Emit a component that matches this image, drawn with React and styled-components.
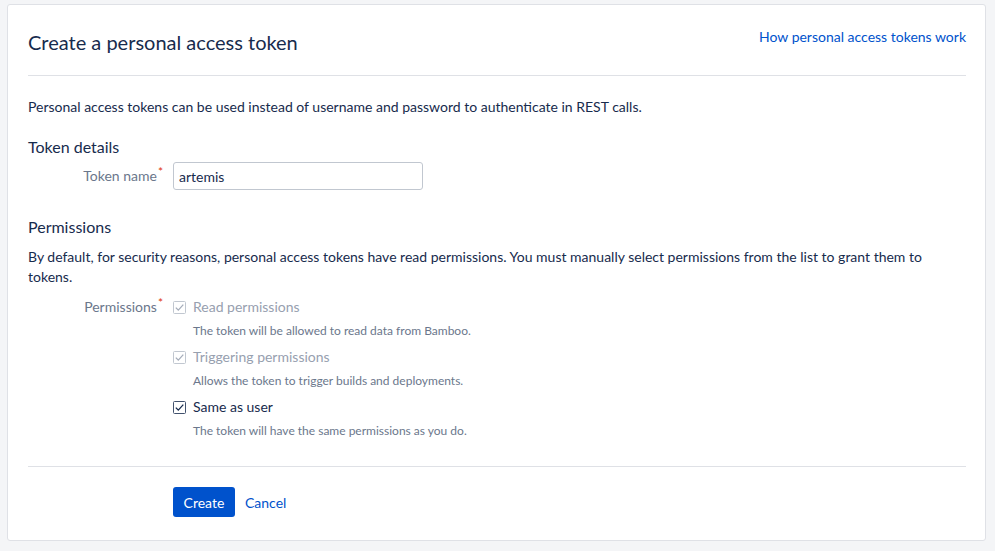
import React from 'react';
import styled, { createGlobalStyle } from 'styled-components';

const GlobalStyle = createGlobalStyle`
  html, body {
    margin: 0;
    padding: 0;
    background: #f4f5f7;
    font-family: Lato, "Open Sans", sans-serif;
    color: #172b4d;
  }
  * { box-sizing: border-box; }
`;

const Page = styled.div`
  padding: 4px 9px 9px 7px;
`;

const Panel = styled.section`
  background: #fff;
  border: 1px solid #dfe1e6;
  border-radius: 3px;
  padding: 22px 19px 23px 20px;
  min-height: 537px;
`;

const Header = styled.header`
  display: flex;
  justify-content: space-between;
  align-items: flex-start;
  padding-bottom: 19px;
  border-bottom: 1px solid #dfe1e6;
`;

const Title = styled.h1`
  margin: 1px 0 0;
  font-size: 20px;
  font-weight: 400;
  line-height: 28px;
`;

const Link = styled.a`
  color: #0052cc;
  text-decoration: none;
  font-size: 14px;
  line-height: 20px;
  cursor: pointer;
`;

const Text = styled.p`
  margin: ${(p) => p.$mt || 0}px 0 0;
  font-size: 14px;
  line-height: 20px;
`;

const SectionTitle = styled.h2`
  margin: ${(p) => p.$mt}px 0 0;
  font-size: 16px;
  font-weight: 400;
  line-height: 24px;
`;

const FieldRow = styled.div`
  display: grid;
  grid-template-columns: 135px 1fr;
  column-gap: 10px;
  margin-top: ${(p) => p.$mt}px;
`;

const Label = styled.label`
  text-align: right;
  font-size: 14px;
  line-height: 20px;
  color: #6b778c;
  padding-top: ${(p) => p.$pt || 0}px;
`;

const Required = styled.span`
  color: #de350b;
  font-size: 12px;
  vertical-align: top;
  position: relative;
  top: -4px;
  margin-left: 1px;
`;

const Input = styled.input`
  width: 250px;
  height: 28px;
  border: 1px solid #c1c7d0;
  border-radius: 3px;
  padding: 0 5px;
  font-family: inherit;
  font-size: 14px;
  color: #172b4d;
  outline: none;
`;

const Options = styled.div`
  display: flex;
  flex-direction: column;
  gap: 8px;
`;

const Option = styled.div`
  display: flex;
  flex-direction: column;
  gap: 6px;
`;

const OptionLine = styled.div`
  display: flex;
  align-items: center;
  gap: 7px;
  font-size: 14px;
  line-height: 20px;
  color: ${(p) => (p.$disabled ? '#97a0af' : '#172b4d')};
`;

const Hint = styled.div`
  padding-left: 20px;
  font-size: 12px;
  line-height: 16px;
  color: #6b778c;
`;

const Divider = styled.hr`
  margin: 27px 0 0;
  border: 0;
  border-top: 1px solid #dfe1e6;
`;

const Actions = styled.div`
  display: flex;
  align-items: center;
  gap: 10px;
  margin-top: 20px;
  padding-left: 145px;

  ${Link} {
    padding-top: 2px;
  }
`;

const Button = styled.button`
  height: 30px;
  min-width: 62px;
  padding: 0 10px;
  border: 0;
  border-radius: 3px;
  background: #0052cc;
  color: #fff;
  font-family: inherit;
  font-size: 14px;
  cursor: pointer;
`;

const Check = ({ disabled }) => (
  <svg width="13" height="13" viewBox="0 0 13 13">
    <rect
      x="0.5"
      y="0.5"
      width="12"
      height="12"
      rx="1"
      fill="#fff"
      stroke={disabled ? '#c1c7d0' : '#42526e'}
    />
    <path
      d="M2.8 6.6 L5.3 9.1 L10.3 3.6"
      fill="none"
      stroke={disabled ? '#a5adba' : '#172b4d'}
      strokeWidth="1.3"
    />
  </svg>
);

const options = [
  { label: 'Read permissions', hint: 'The token will be allowed to read data from Bamboo.', disabled: true },
  { label: 'Triggering permissions', hint: 'Allows the token to trigger builds and deployments.', disabled: true },
  { label: 'Same as user', hint: 'The token will have the same permissions as you do.', disabled: false },
];

export default function App() {
  return (
    <Page>
      <GlobalStyle />
      <Panel>
        <Header>
          <Title>Create a personal access token</Title>
          <Link>How personal access tokens work</Link>
        </Header>

        <Text $mt={21}>
          Personal access tokens can be used instead of username and password to authenticate in REST calls.
        </Text>

        <SectionTitle $mt={18}>Token details</SectionTitle>
        <FieldRow $mt={3}>
          <Label $pt={4}>
            Token name<Required>*</Required>
          </Label>
          <Input defaultValue="artemis" />
        </FieldRow>

        <SectionTitle $mt={25}>Permissions</SectionTitle>
        <Text $mt={8}>
          By default, for security reasons, personal access tokens have read permissions. You must manually select
          permissions from the list to grant them to tokens.
        </Text>
        <FieldRow $mt={10}>
          <Label>
            Permissions<Required>*</Required>
          </Label>
          <Options>
            {options.map((o) => (
              <Option key={o.label}>
                <OptionLine $disabled={o.disabled}>
                  <Check disabled={o.disabled} />
                  {o.label}
                </OptionLine>
                <Hint>{o.hint}</Hint>
              </Option>
            ))}
          </Options>
        </FieldRow>

        <Divider />
        <Actions>
          <Button>Create</Button>
          <Link>Cancel</Link>
        </Actions>
      </Panel>
    </Page>
  );
}
